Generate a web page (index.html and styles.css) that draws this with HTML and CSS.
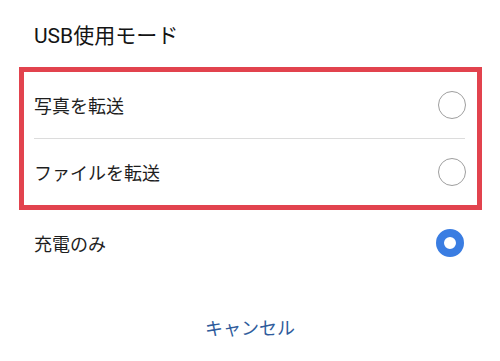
FILE: index.html
```html
<!DOCTYPE html>
<html lang="ja">
<head>
<meta charset="utf-8">
<link rel="stylesheet" href="styles.css">
</head>
<body>
<div class="dialog">
  <div class="title">USB使用モード</div>
  <div class="highlight">
    <div class="row">
      <span class="label">写真を転送</span>
      <span class="radio"></span>
    </div>
    <div class="divider"></div>
    <div class="row">
      <span class="label">ファイルを転送</span>
      <span class="radio"></span>
    </div>
  </div>
  <div class="row row-plain">
    <span class="label">充電のみ</span>
    <span class="radio radio-on"></span>
  </div>
  <div class="footer">
    <span class="cancel">キャンセル</span>
  </div>
</div>
</body>
</html>
```
FILE: styles.css
```css
html, body {
  margin: 0;
  padding: 0;
  background: #ffffff;
}
body {
  font-family: "Noto Sans CJK JP", "Noto Sans", "Roboto", sans-serif;
  color: #212121;
}
.dialog {
  width: 500px;
  height: 361px;
  box-sizing: border-box;
  overflow: hidden;
}
.title {
  height: 67px;
  box-sizing: border-box;
  padding: 24px 0 0 34px;
  font-family: "Roboto", "Noto Sans CJK JP", sans-serif;
  font-size: 21px;
  line-height: 24px;
  color: #141414;
}
.highlight {
  margin-left: 19px;
  width: 463px;
  box-sizing: border-box;
  border: 5px solid #e2434e;
}
.row {
  height: 66px;
  display: flex;
  align-items: center;
  justify-content: space-between;
  padding: 0 11px 0 10px;
}
.row-plain {
  height: 65px;
  padding: 0 36px 0 34px;
}
.label {
  font-size: 18px;
  line-height: 24px;
  color: #1e1e1e;
}
.divider {
  height: 1px;
  background: #dcdcdc;
  margin: 0 12px 0 10px;
}
.radio {
  width: 28px;
  height: 28px;
  box-sizing: border-box;
  border-radius: 50%;
  border: 1.5px solid #9e9e9e;
  background: #ffffff;
}
.radio-on {
  border: 8px solid #3a7de2;
}
.footer {
  display: flex;
  justify-content: center;
  padding-top: 40px;
}
.cancel {
  font-size: 18px;
  line-height: 24px;
  color: #2f5c9c;
}
```
